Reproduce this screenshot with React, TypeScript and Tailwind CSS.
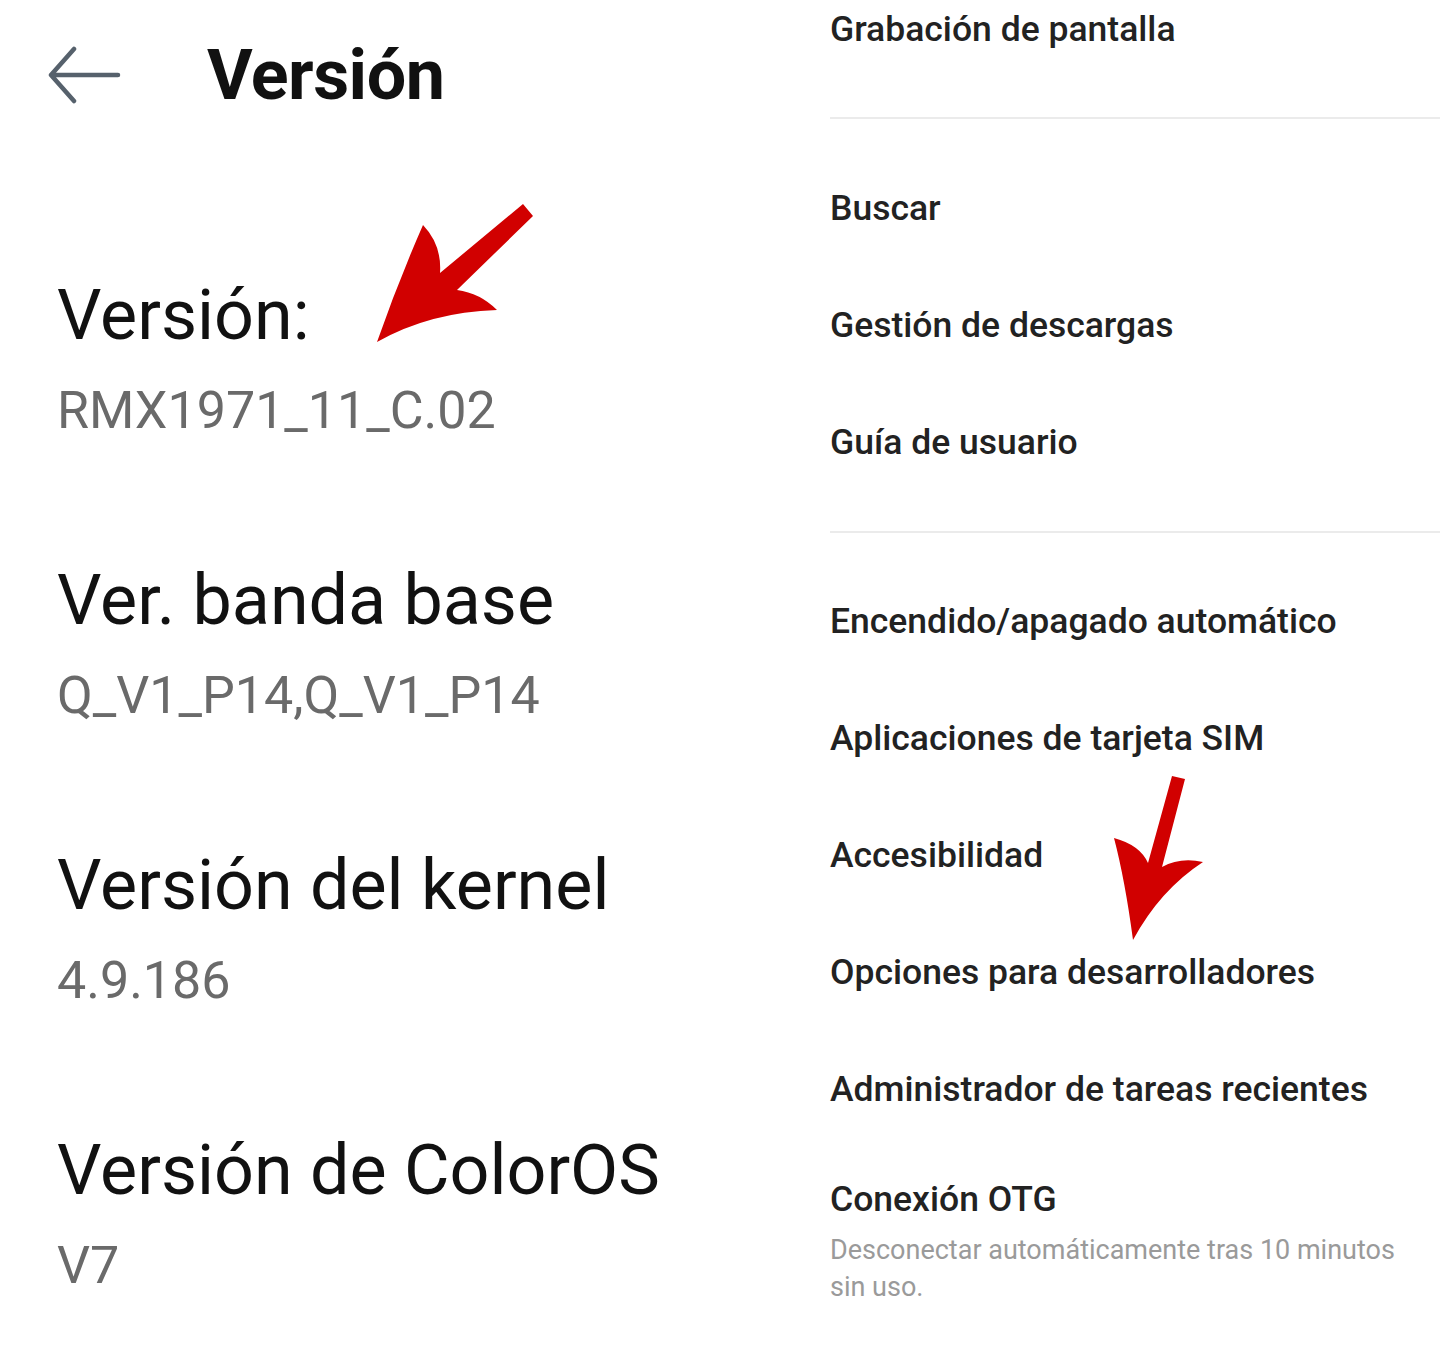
import React from "react";

const leftItems = [
  { label: "Versión:", value: "RMX1971_11_C.02" },
  { label: "Ver. banda base", value: "Q_V1_P14,Q_V1_P14" },
  { label: "Versión del kernel", value: "4.9.186" },
  { label: "Versión de ColorOS", value: "V7" },
];

function Row({ text }: { text: string }) {
  return (
    <div className="h-[117px] flex items-center text-[35.5px] font-medium text-[#222] leading-none">
      {text}
    </div>
  );
}

export default function App() {
  return (
    <div
      className="relative w-[1440px] h-[1345px] overflow-hidden bg-white flex"
      style={{ fontFamily: "Roboto, 'Noto Sans', sans-serif" }}
    >
      {/* Left column */}
      <div className="w-[830px] shrink-0 flex flex-col">
        <div className="h-[150px] flex items-center pl-[48px]">
          <svg width="76" height="60" viewBox="0 0 76 60" className="shrink-0">
            <path
              d="M26 4 L3 30 L26 56 M3 30 L70 30"
              fill="none"
              stroke="#56616c"
              strokeWidth="4.5"
              strokeLinecap="round"
              strokeLinejoin="round"
            />
          </svg>
          <div className="ml-[83px] text-[70px] font-bold text-[#111] leading-none tracking-[-0.5px]">
            Versión
          </div>
        </div>
        <div className="flex flex-col pl-[57px] pt-[117px] gap-[93px]">
          {leftItems.map((it) => (
            <div key={it.label} className="flex flex-col">
              <div className="h-[96px] flex items-center text-[70px] text-[#111] leading-none">
                {it.label}
              </div>
              <div className="h-[96px] flex items-center text-[52px] text-[#6a6a6a] leading-none">
                {it.value}
              </div>
            </div>
          ))}
        </div>
      </div>

      {/* Right column */}
      <div className="flex-1 flex flex-col">
        <div className="h-[60px] flex items-center text-[35.5px] font-medium text-[#222] leading-none">
          Grabación de pantalla
        </div>
        <div className="mt-[57px] h-[2px] bg-[#ebebeb]" />
        <div className="mt-[31px] flex flex-col">
          <Row text="Buscar" />
          <Row text="Gestión de descargas" />
          <Row text="Guía de usuario" />
        </div>
        <div className="mt-[30px] h-[2px] bg-[#ebebeb]" />
        <div className="mt-[30px] flex flex-col">
          <Row text="Encendido/apagado automático" />
          <Row text="Aplicaciones de tarjeta SIM" />
          <Row text="Accesibilidad" />
          <Row text="Opciones para desarrolladores" />
          <Row text="Administrador de tareas recientes" />
        </div>
        <div className="flex flex-col pt-[32px]">
          <div className="h-[40px] flex items-center text-[35.5px] font-medium text-[#222] leading-none">
            Conexión OTG
          </div>
          <div className="mt-[12px] text-[27px] leading-[37px] text-[#9a9a9a] w-[590px]">
            Desconectar automáticamente tras 10 minutos sin uso.
          </div>
        </div>
      </div>

      {/* Red annotation arrows */}
      <svg
        className="absolute inset-0 pointer-events-none"
        width="1440"
        height="1345"
        viewBox="0 0 1440 1345"
      >
        <path
          d="M377,342 Q398,282 423,225 Q442,245 440,273 L523,204 L533,216 L457,290 Q480,293 497,310 Q430,312 377,342 Z"
          fill="#d10000"
        />
        <path
          d="M1133,940 Q1125,880 1114,838 Q1140,845 1148,863 L1172,776 L1185,779 L1162,867 Q1180,857 1203,862 Q1160,890 1133,940 Z"
          fill="#d10000"
        />
      </svg>
    </div>
  );
}
